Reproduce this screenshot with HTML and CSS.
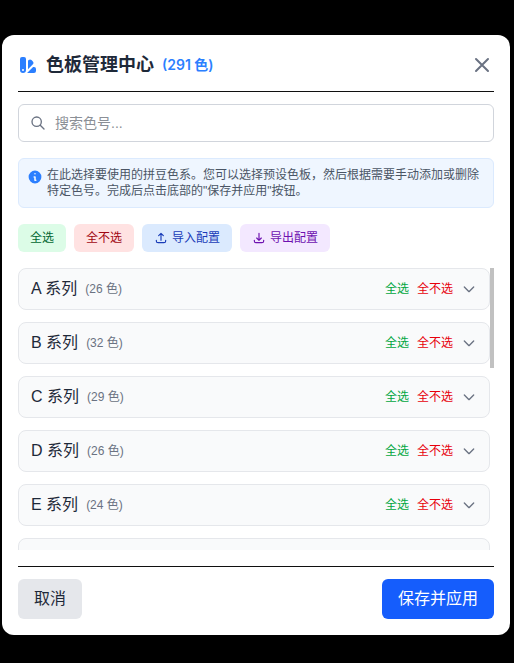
FILE: index.html
```html
<!DOCTYPE html>
<html lang="zh-CN">
<head>
    <meta charset="UTF-8">
    <meta name="viewport" content="width=device-width, initial-scale=1.0">
    <title>色板管理中心</title>
    <link rel="stylesheet" href="styles.css">
</head>
<body>

<main class="modal">
    <header class="modal-header">
        <h1>
            <svg class="logo" viewBox="0 0 20 20" fill="currentColor" aria-hidden="true">
                <path fill-rule="evenodd" d="M4 2a2 2 0 0 0-2 2v11a3 3 0 1 0 6 0V4a2 2 0 0 0-2-2H4zm1 14a1 1 0 1 0 0-2 1 1 0 0 0 0 2zm5-1.757 4.9-4.9a2 2 0 0 0 0-2.828L13.485 5.1a2 2 0 0 0-2.828 0L10 5.757v8.486zM16 18H9.071l6-6H16a2 2 0 0 1 2 2v2a2 2 0 0 1-2 2z" clip-rule="evenodd"/>
            </svg>
            色板管理中心
            <span class="total">(291 色)</span>
        </h1>
        <button type="button" class="close" aria-label="关闭">
            <svg viewBox="0 0 24 24"><path d="M6 18L18 6M6 6l12 12"/></svg>
        </button>
    </header>

    <label class="search">
        <svg viewBox="0 0 24 24" aria-hidden="true"><path d="M21 21l-6-6m2-5a7 7 0 1 1-14 0 7 7 0 0 1 14 0z"/></svg>
        <input type="text" placeholder="搜索色号..." aria-label="搜索色号">
    </label>

    <div class="info">
        <svg viewBox="0 0 20 20" fill="currentColor" aria-hidden="true">
            <path fill-rule="evenodd" d="M18 10a8 8 0 1 1-16 0 8 8 0 0 1 16 0zm-7-4a1 1 0 1 1-2 0 1 1 0 0 1 2 0zM9 9a1 1 0 0 0 0 2v3a1 1 0 0 0 1 1h1a1 1 0 1 0 0-2v-3a1 1 0 0 0-1-1H9z" clip-rule="evenodd"/>
        </svg>
        <p>在此选择要使用的拼豆色系。您可以选择预设色板，然后根据需要手动添加或删除特定色号。完成后点击底部的"保存并应用"按钮。</p>
    </div>

    <div class="actions">
        <button type="button" class="action green">全选</button>
        <button type="button" class="action red">全不选</button>
        <button type="button" class="action blue">
            <svg viewBox="0 0 24 24" aria-hidden="true"><path d="M4 16v1a3 3 0 0 0 3 3h10a3 3 0 0 0 3-3v-1M16 8l-4-4-4 4M12 4v12"/></svg>
            导入配置
        </button>
        <button type="button" class="action purple">
            <svg viewBox="0 0 24 24" aria-hidden="true"><path d="M4 16v1a3 3 0 0 0 3 3h10a3 3 0 0 0 3-3v-1M16 12l-4 4-4-4M12 16V4"/></svg>
            导出配置
        </button>
    </div>

    <div class="scroller">
        <div class="list" id="list"></div>
        <div class="scrollbar"><div class="thumb" id="thumb"></div></div>
    </div>

    <footer class="modal-footer">
        <button type="button" class="btn cancel">取消</button>
        <button type="button" class="btn save">保存并应用</button>
    </footer>
</main>

<script>
    const series = [
        ['A', 26], ['B', 32], ['C', 29], ['D', 26], ['E', 24],
        ['F', 25], ['G', 21], ['H', 23], ['M', 15], ['P', 23],
        ['Q', 5], ['R', 28], ['T', 1], ['Y', 5], ['ZG', 8]
    ];
    const list = document.getElementById('list');
    const thumb = document.getElementById('thumb');

    list.innerHTML = series.map(([name, count]) => `
        <section class="group">
            <h2>${name} 系列 <span class="count">(${count} 色)</span></h2>
            <div class="group-actions">
                <button type="button" class="link select">全选</button>
                <button type="button" class="link clear">全不选</button>
                <button type="button" class="toggle" aria-label="展开 ${name} 系列">
                    <svg viewBox="0 0 24 24"><path d="M19 9l-7 7-7-7"/></svg>
                </button>
            </div>
        </section>
    `).join('');

    function updateThumb() {
        thumb.style.height = `${list.clientHeight / list.scrollHeight * 100}%`;
        thumb.style.marginTop = `${list.scrollTop / list.scrollHeight * list.clientHeight}px`;
    }

    list.addEventListener('scroll', updateThumb);
    window.addEventListener('resize', updateThumb);
    updateThumb();
</script>

</body>
</html>
```
FILE: styles.css
```css
* {
    box-sizing: border-box;
}
body {
    display: flex;
    height: 100vh;
    margin: 0;
    padding: 35px 4px 28px 2px;
    background-color: #000;
    color: #1e2939;
    font-family: 'Liberation Sans', 'Noto Sans CJK SC', sans-serif;
    font-size: 16px;
    line-height: 24px;
}
h1, h2, p {
    margin: 0;
}
button {
    padding: 0;
    border: none;
    background: none;
    color: inherit;
    font: inherit;
    cursor: pointer;
}
svg {
    display: block;
    flex-shrink: 0;
}
path {
    stroke-linecap: round;
    stroke-linejoin: round;
}
.modal {
    display: flex;
    flex-direction: column;
    flex: 1;
    min-width: 0;
    padding: 16px;
    border-radius: 12px;
    background-color: #fff;
}
.modal-header {
    display: flex;
    align-items: center;
    justify-content: space-between;
    padding-bottom: 12px;
    border-bottom: 1px solid #101010;
}
.modal-header h1 {
    display: flex;
    align-items: center;
    gap: 8px;
    font-size: 18px;
    font-weight: 700;
    line-height: 28px;
}
.logo {
    width: 20px;
    height: 20px;
    color: #2b7fff;
}
.total {
    color: #2b7fff;
    font-family: Inter, 'Noto Sans CJK SC', sans-serif;
    font-size: 14px;
    font-weight: 600;
}
.close {
    color: #6a7282;
}
.close svg,
.search svg,
.action svg,
.toggle svg {
    fill: none;
    stroke: currentColor;
    stroke-width: 2;
}
.close svg {
    width: 24px;
    height: 24px;
}
.search {
    display: flex;
    align-items: center;
    gap: 9px;
    margin-top: 12px;
    padding: 8px 11px;
    border: 1px solid #d1d5dc;
    border-radius: 6px;
    color: #6a7282;
}
.search svg {
    width: 16px;
    height: 16px;
}
.search input {
    flex: 1;
    min-width: 0;
    height: 20px;
    padding: 0;
    border: none;
    outline: none;
    background: none;
    color: #1e2939;
    font: inherit;
    font-size: 14px;
}
.search input::placeholder {
    color: #8b8f96;
}
.info {
    display: flex;
    gap: 4px;
    margin-top: 16px;
    padding: 8px;
    border: 1px solid #dbeafe;
    border-radius: 6px;
    background-color: #eff6ff;
    color: #4a5565;
    font-size: 12px;
    line-height: 16px;
}
.info svg {
    width: 16px;
    height: 16px;
    margin-top: 2px;
    color: #2b7fff;
}
.actions {
    display: flex;
    flex-wrap: wrap;
    gap: 8px;
    margin: 16px 0;
}
.action {
    display: flex;
    align-items: center;
    gap: 4px;
    padding: 6px 12px;
    border-radius: 6px;
    font-size: 12px;
    line-height: 16px;
}
.action svg {
    width: 14px;
    height: 14px;
}
.green {
    background-color: #dcfce7;
    color: #016630;
}
.red {
    background-color: #ffe2e2;
    color: #9f0712;
}
.blue {
    background-color: #dbeafe;
    color: #193cb8;
}
.purple {
    background-color: #f3e8ff;
    color: #6e11b0;
}
.scroller {
    display: flex;
    flex: 1;
    min-height: 0;
}
.list {
    display: flex;
    flex-direction: column;
    flex: 1;
    gap: 12px;
    min-width: 0;
    overflow-y: auto;
    scrollbar-width: none;
}
.scrollbar {
    display: flow-root;
    width: 4px;
}
.thumb {
    background-color: #c1c1c1;
}
.group {
    display: flex;
    flex-shrink: 0;
    align-items: center;
    justify-content: space-between;
    padding: 8px 12px;
    border: 1px solid #e5e7eb;
    border-radius: 8px;
    background-color: #f9fafb;
}
.group h2 {
    display: flex;
    align-items: center;
    gap: 8px;
    font-size: 16px;
    font-weight: 400;
}
.count {
    color: #6a7282;
    font-size: 12px;
}
.group-actions {
    display: flex;
    align-items: center;
    gap: 8px;
}
.link {
    font-size: 12px;
    line-height: 16px;
}
.select {
    color: #00a63e;
}
.clear {
    color: #e7000b;
}
.toggle {
    color: #6a7282;
}
.toggle svg {
    width: 16px;
    height: 16px;
}
.modal-footer {
    display: flex;
    justify-content: space-between;
    margin-top: 16px;
    padding-top: 12px;
    border-top: 1px solid #101010;
}
.btn {
    padding: 8px 16px;
    border-radius: 6px;
}
.cancel {
    background-color: #e5e7eb;
}
.save {
    background-color: #155dfc;
    color: #fff;
}
```
